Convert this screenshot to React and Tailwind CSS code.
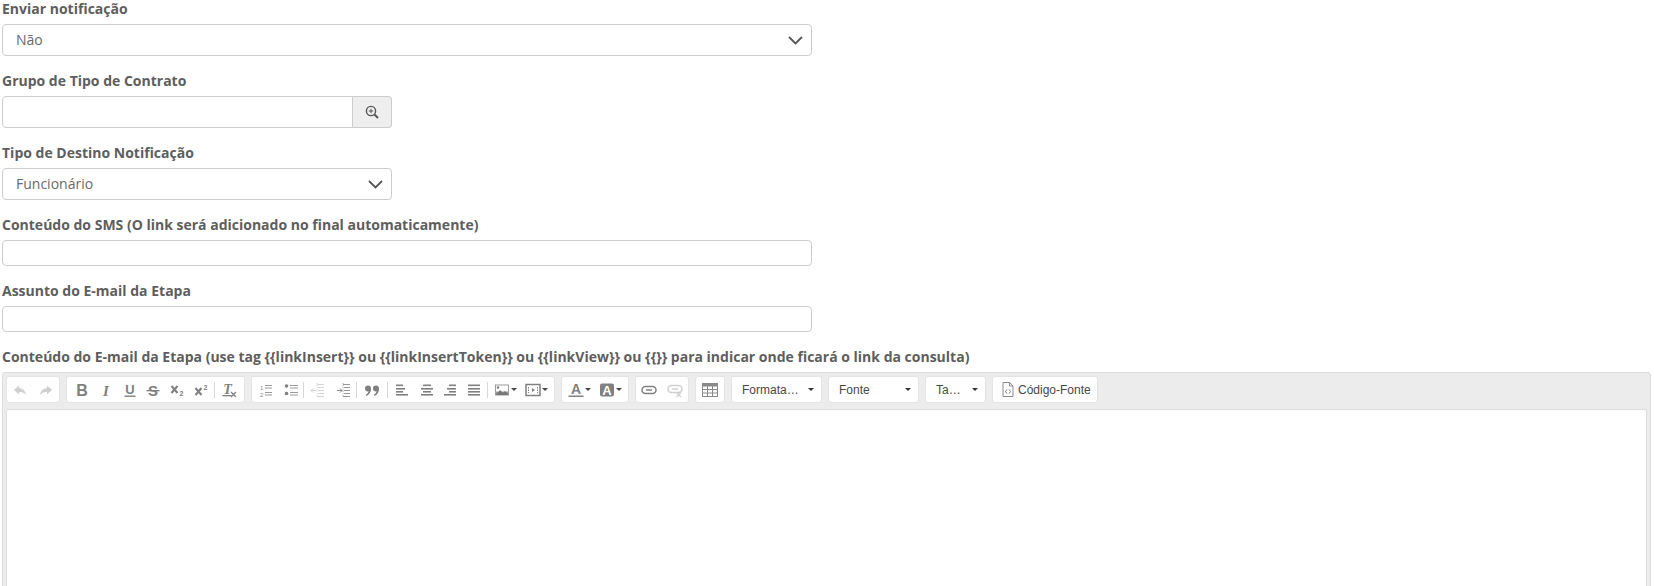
import React from "react";

const Label = ({ children, className = "" }) => (
  <label className={`block text-[14px] leading-[17px] font-bold text-[#5e5e5e] ${className}`}>{children}</label>
);

const Chevron = () => (
  <svg width="15" height="9" viewBox="0 0 15 9" className="shrink-0"><path d="M1 1l6.500 6.500L14 1" fill="none" stroke="#555" strokeWidth="1.800" /></svg>
);

const SelectBox = ({ value }) => (
  <div className="mt-[7px] h-[32px] border border-[#cccccc] rounded-[4px] flex items-center justify-between pl-[13px] pr-[8px] text-[14px] text-[#6a6a6a] bg-white">
    <span className="mt-[-2px]">{value}</span>
    <Chevron />
  </div>
);

const I = ({ children, w = 16, h = 16 }) => (
  <svg width={w} height={h} viewBox={`0 0 ${w} ${h}`} className="block shrink-0">{children}</svg>
);

const Btn = ({ children, w = 24, left }) => (
  <div className={`h-[25px] flex items-center shrink-0 ${left ? "justify-start pl-[6px]" : "justify-center"}`} style={{ width: w }}>{children}</div>
);
const Sep = () => <div className="w-px h-[16px] bg-[#d8d8d8] shrink-0" />;
const Caret = () => <div className="ml-[1px] w-0 h-0 border-x-[3px] border-x-transparent border-t-[3px] border-t-[#474747]" />;
const Group = ({ children, w }) => (
  <div className="h-[27px] bg-white rounded-[3px] border border-[#e4e4e4] flex items-center shrink-0 box-border" style={{ width: w }}>{children}</div>
);

const c = "#808080";
const light = "#cfcfcf";
const lines = (arr, col = c, h = 1.6) => arr.map(([x, y, wd], i) => <rect key={i} x={x} y={y} width={wd} height={h} fill={col} />);

const Combo = ({ label, w }) => (
  <div className="h-[27px] bg-white rounded-[3px] border border-[#e4e4e4] flex items-center justify-between pl-[10px] pr-[7px] shrink-0 box-border" style={{ width: w }}>
    <span className="text-[12px] text-[#484848]" style={{ fontFamily: '"Liberation Sans", Arial, sans-serif' }}>{label}</span>
    <div className="w-0 h-0 border-x-[3px] border-x-transparent border-t-[3px] border-t-[#333333]" />
  </div>
);

export default function App() {
  return (
    <div className="h-[586px] w-[1654px] overflow-hidden bg-white pl-[2px] pr-[3px]" style={{ fontFamily: '"Open Sans", sans-serif' }}>
      <div className="w-[810px]">
        <Label>Enviar notificação</Label>
        <SelectBox value="Não" />
      </div>
      <div className="w-[390px] mt-[16px]">
        <Label>Grupo de Tipo de Contrato</Label>
        <div className="mt-[7px] h-[32px] flex">
          <div className="flex-1 border border-[#cccccc] rounded-l-[4px] bg-white" />
          <div className="w-[39px] border border-l-0 border-[#cccccc] rounded-r-[4px] bg-[#eeeeee] flex items-center justify-center">
            <svg width="14" height="14" viewBox="0 0 14 14"><circle cx="6" cy="6" r="4.600" fill="none" stroke="#555" strokeWidth="1.400" /><path d="M9.500 9.500L13 13" stroke="#555" strokeWidth="2" /><path d="M6 3.800v4.400M3.800 6h4.400" stroke="#555" strokeWidth="1" /></svg>
          </div>
        </div>
      </div>
      <div className="w-[390px] mt-[16px]">
        <Label>Tipo de Destino Notificação</Label>
        <SelectBox value="Funcionário" />
      </div>
      <div className="w-[810px] mt-[16px]">
        <Label>Conteúdo do SMS (O link será adicionado no final automaticamente)</Label>
        <div className="mt-[7px] h-[26px] border border-[#cccccc] rounded-[4px] bg-white" />
      </div>
      <div className="w-[810px] mt-[16px]">
        <Label>Assunto do E-mail da Etapa</Label>
        <div className="mt-[7px] h-[26px] border border-[#cccccc] rounded-[4px] bg-white" />
      </div>
      <Label className="mt-[16px]">Conteúdo do E-mail da Etapa (use tag {"{{linkInsert}}"} ou {"{{linkInsertToken}}"} ou {"{{linkView}}"} ou {"{{}}"} para indicar onde ficará o link da consulta)</Label>
      <div className="mt-[7px] h-[300px] border border-[#dcdcdc] rounded-t-[3px] bg-[#ececec] pl-[3px] pr-[3px] pt-[3px]">
        <div className="flex gap-[6px] h-[27px] items-center">
          <Group w={54}>
            <Btn w={26}><I><path d="M7 3.500L2 8l5 4.500V10c3 0 5 .5 7 3-.5-4-3-6.500-7-7z" fill="#d0d0d0" /></I></Btn>
            <Btn w={25}><I><path d="M9 3.500L14 8l-5 4.500V10c-3 0-5 .5-7 3 .5-4 3-6.500 7-7z" fill="#d0d0d0" /></I></Btn>
          </Group>
          <Group w={179}>
            <div className="ml-[3px]" />
            <Btn w={24}><I><text x="8" y="14" textAnchor="middle" fontSize="16" fontWeight="700" fontFamily="Liberation Sans" fill={c}>B</text></I></Btn>
            <Btn w={24}><I><text x="8" y="13.500" textAnchor="middle" fontSize="15" fontStyle="italic" fontWeight="700" fontFamily="Liberation Serif" fill={c}>I</text></I></Btn>
            <Btn w={23}><I><text x="8" y="12" textAnchor="middle" fontSize="13" fontWeight="700" fontFamily="Liberation Sans" fill={c}>U</text><rect x="2.500" y="13.500" width="11" height="1.400" fill={c} /></I></Btn>
            <Btn w={24}><I><text x="8" y="13.500" textAnchor="middle" fontSize="15" fontWeight="700" fontFamily="Liberation Sans" fill={c}>S</text><rect x="1.500" y="8" width="13" height="1.300" fill={c} /></I></Btn>
            <Btn w={25}><I><path d="M1.500 4l6 7M7.500 4l-6 7" stroke={c} strokeWidth="2" fill="none" /><text x="9.500" y="14" fontSize="7" fontWeight="700" fontFamily="Liberation Sans" fill={c}>2</text></I></Btn>
            <Btn w={24}><I><path d="M1.500 6l6 7M7.500 6l-6 7" stroke={c} strokeWidth="2" fill="none" /><text x="9.500" y="8" fontSize="7" fontWeight="700" fontFamily="Liberation Sans" fill={c}>2</text></I></Btn>
            <Sep />
            <Btn w={28}><I><text x="6.500" y="12" textAnchor="middle" fontSize="14" fontStyle="italic" fontWeight="700" fontFamily="Liberation Serif" fill={c}>T</text><rect x="1.500" y="13" width="9" height="1.300" fill={c} /><path d="M10 10l5 5M15 10l-5 5" stroke={c} strokeWidth="1.300" /></I></Btn>
          </Group>
          <Group w={304}>
            <div className="ml-[2px]" />
            <Btn w={24}><I>{lines([[7, 3, 7], [7, 5.500, 7], [7, 10, 7], [7, 12.500, 7]], "#999", 1)}<text x="2" y="7.500" fontSize="6" fontFamily="Liberation Sans" fill="#888">1</text><text x="2" y="14.500" fontSize="6" fontFamily="Liberation Sans" fill="#888">2</text></I></Btn>
            <Btn w={25}><I><circle cx="3.500" cy="4" r="1.800" fill={c} /><circle cx="3.500" cy="11.500" r="1.800" fill={c} />{lines([[7, 3, 8], [7, 5.500, 8], [7, 10, 8], [7, 12.500, 8]], "#999", 1)}</I></Btn>
            <Sep />
            <Btn w={28}><I>{lines([[7, 2, 7], [8, 5, 6], [8, 8, 6], [8, 11, 6], [7, 14, 7]], "#d4d4d4", 1)}<path d="M1 8.500h5M3 6.500l-2 2 2 2" stroke="#d0d0d0" fill="none" /><path d="M7 1v14" stroke="#d8d8d8" strokeDasharray="1 1" /></I></Btn>
            <Btn w={24}><I>{lines([[7, 2, 7], [8, 5, 6], [8, 8, 6], [8, 11, 6], [7, 14, 7]], "#999", 1)}<path d="M1 8.500h5M4 6.500l2 2-2 2" stroke="#8a8a8a" fill="none" /><path d="M7 1v14" stroke="#aaa" strokeDasharray="1 1" /></I></Btn>
            <Sep />
            <Btn w={30}><I><circle cx="4" cy="6.500" r="3" fill={c} /><path d="M7 6.500c0 3.500-1.500 6-4.500 7.500l-.7-1.200c1.700-1 2.700-2.500 3-4.300z" fill={c} /><circle cx="12" cy="6.500" r="3" fill={c} /><path d="M15 6.500c0 3.500-1.500 6-4.500 7.500l-.7-1.200c1.700-1 2.700-2.500 3-4.300z" fill={c} /></I></Btn>
            <Sep />
            <Btn w={27}><I>{lines([[2, 2.500, 7], [2, 6, 9], [2, 9, 7], [2, 12, 12]])}</I></Btn>
            <Btn w={24}><I>{lines([[4, 2.500, 8], [2, 6, 12], [4, 9, 8], [2, 12, 12]])}</I></Btn>
            <Btn w={22}><I>{lines([[7, 2.500, 7], [5, 6, 9], [7, 9, 7], [2, 12, 12]])}</I></Btn>
            <Btn w={26}><I>{lines([[2, 2.500, 12], [2, 6, 12], [2, 9, 12], [2, 12, 12]])}</I></Btn>
            <Sep />
            <Btn w={31} left><I><rect x="1" y="2.500" width="14" height="11" fill="#9a9a9a" /><rect x="2" y="3.500" width="12" height="6" fill="#fff" /><path d="M2 13l4-5 3 3 2-2 3 3v1z" fill="#777" /><circle cx="4" cy="5.500" r="1.200" fill="#777" /></I><Caret /></Btn>
            <Btn w={31} left><I><rect x="1" y="2.500" width="14" height="11" fill="none" stroke={c} strokeWidth="1.500" /><path d="M7 6l3 2-3 2z" fill={c} /><path d="M3.500 5v6M12.500 5v6" stroke={c} strokeDasharray="1.500 1" /></I><Caret /></Btn>
          </Group>
          <Group w={68}>
            <Btn w={31} left><I><text x="8" y="12" textAnchor="middle" fontSize="14" fontWeight="700" fontFamily="Liberation Sans" fill={c}>A</text><rect x="0.500" y="13.500" width="15" height="1.500" fill={c} /></I><Caret /></Btn>
            <Btn w={34} left><I><rect x="1" y="1.500" width="14" height="13" rx="2" fill={c} /><text x="8" y="13" textAnchor="middle" fontSize="13" fontWeight="700" fontFamily="Liberation Sans" fill="#fff">A</text></I><Caret /></Btn>
          </Group>
          <Group w={54}>
            <Btn w={26}><I><rect x="1" y="4.500" width="14" height="7" rx="3.500" fill="none" stroke={c} strokeWidth="1.500" /><path d="M5 8h6" stroke={c} strokeWidth="1.500" /></I></Btn>
            <Btn w={25}><I><rect x="1" y="3.500" width="14" height="7" rx="3.500" fill="none" stroke={light} strokeWidth="1.500" /><path d="M5 7h6" stroke={light} strokeWidth="1.500" /><path d="M9.500 10.500l4.500 4.500M14 10.500l-4.500 4.500" stroke={light} strokeWidth="1.300" /></I></Btn>
          </Group>
          <Group w={30}>
            <Btn w={28}><I><rect x="0.500" y="1.500" width="15" height="13" fill="none" stroke="#8a8a8a" /><rect x="0.500" y="1.500" width="15" height="3" fill="#8a8a8a" /><path d="M5.500 4v11M10.500 4v11M1 7.500h14M1 11h14" stroke="#8a8a8a" /></I></Btn>
          </Group>
          <Combo label="Formata…" w={91} />
          <Combo label="Fonte" w={91} />
          <Combo label="Ta…" w={61} />
          <div className="h-[27px] w-[106px] bg-white rounded-[3px] border border-[#e4e4e4] flex items-center pl-[9px] shrink-0 box-border">
            <svg width="12" height="15" viewBox="0 0 12 15"><path d="M1 .5h6.500L11 4v10.500H1z" fill="none" stroke="#8a8a8a" /><path d="M7.500 .5V4H11" fill="none" stroke="#8a8a8a" /><path d="M5 7.500L3.500 9.500 5 11.500M7 7.500l1.500 2L7 11.500" fill="none" stroke="#777" /></svg>
            <span className="ml-[4px] text-[12px] text-[#474747]" style={{ fontFamily: '"Liberation Sans", Arial, sans-serif' }}>Código-Fonte</span>
          </div>
        </div>
        <div className="mt-[6px] h-[300px] bg-white border border-[#dddddd] rounded-t-[2px]" />
      </div>
    </div>
  );
}
